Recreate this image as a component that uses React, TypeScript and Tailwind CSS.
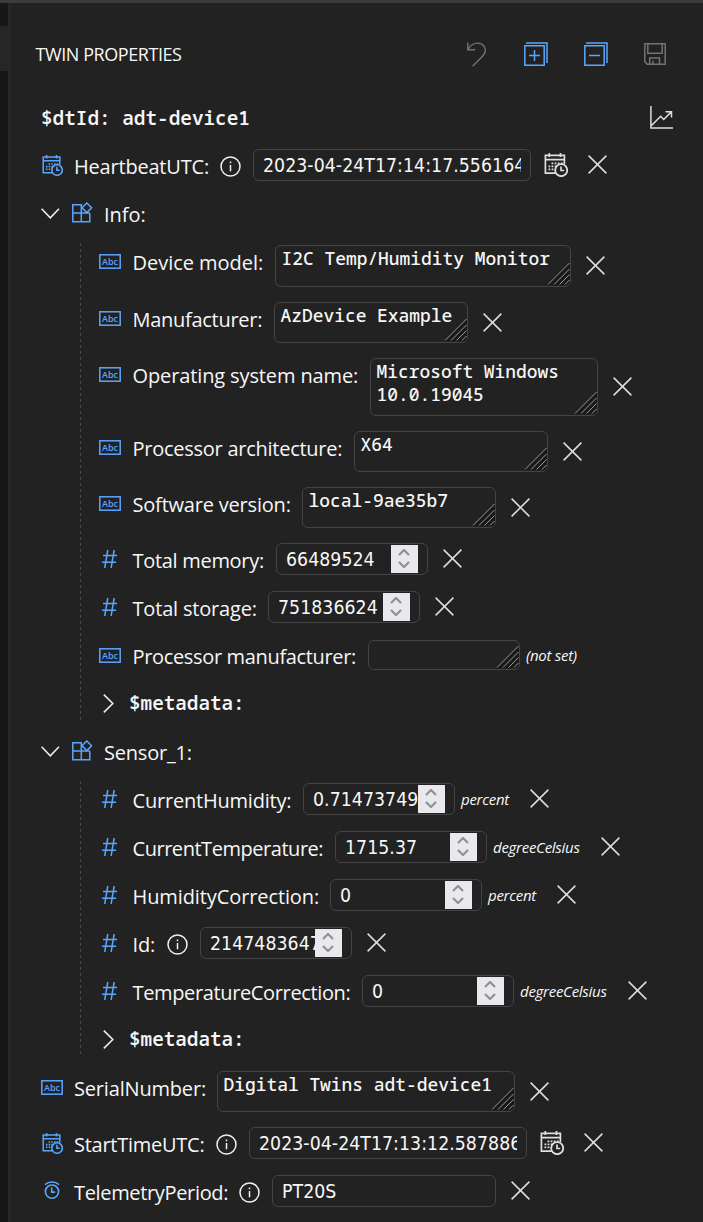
import type { ReactNode } from 'react';

const BLUE = '#5aa6ff';

function CalendarClock({ size, color }: { size: number; color: string }) {
  return (
    <svg width={size} height={size} viewBox="0 0 24 24" fill="none" stroke={color} strokeWidth="1.7" className="shrink-0">
      <path d="M12 20.2H1.4V2.4h19V11M1.4 6.7h19M5.3 0v4M16.5 0v4" />
      <path d="M7.5 10.3h11.5M4.5 13.3h8.6M4.5 16.3h7" strokeDasharray="1.8 1.3" strokeWidth="1.8" />
      <circle cx="17.2" cy="17.2" r="6" strokeWidth="1.8" />
      <path d="M17 13.4v4.1h3.2" />
    </svg>
  );
}

function AbcIcon() {
  return (
    <svg width="22" height="15" viewBox="0 0 22 15" className="shrink-0">
      <rect x="0.8" y="0.8" width="20.4" height="13.4" fill="none" stroke={BLUE} strokeWidth="1.5" />
      <text x="11" y="11" textAnchor="middle" fill={BLUE} textLength="16" className="font-['Open_Sans',sans-serif] text-[9px] font-semibold">Abc</text>
    </svg>
  );
}

function HashIcon() {
  return (
    <svg width="15" height="18" viewBox="0 0 15 18" fill="none" stroke={BLUE} strokeWidth="1.5" className="shrink-0">
      <path d="M5.8 0 2.7 18M12.2 0 9.1 18M1 5.5h14M0 12.2h14" />
    </svg>
  );
}

function ClockIcon() {
  return (
    <svg width="16" height="18" viewBox="0 0 16 18" fill="none" stroke={BLUE} strokeWidth="1.6" className="shrink-0">
      <circle cx="8" cy="10.6" r="6.6" />
      <path d="M7.7 6.5v4.6h3.4M1 3.6C5 .1 11 .1 15 3.6" />
    </svg>
  );
}

function ComponentIcon() {
  return (
    <svg width="21" height="21" viewBox="0 0 21 21" fill="none" stroke={BLUE} strokeWidth="1.5" className="shrink-0">
      <path d="M10 2.7H.8v17h17V11.2M.8 11h17M9.3 2.7v17" />
      <path d="m14.8 1 4.8 4.8-4.8 4.8L10 5.8z" />
    </svg>
  );
}

function InfoIcon() {
  return (
    <svg width="21" height="21" viewBox="0 0 21 21" fill="none" stroke="#f0f0f0" strokeWidth="1.5" className="mt-[14.5px] shrink-0">
      <circle cx="10.5" cy="10.5" r="9.5" />
      <path d="M10.5 9v6.2M10.5 5.6v1.7" />
    </svg>
  );
}

function Cross() {
  return (
    <svg width="19" height="19" viewBox="0 0 19 19" fill="none" stroke="#dedede" strokeWidth="1.5" className="-mt-px shrink-0">
      <path d="m.6.6 17.8 17.8M18.4.6.6 18.4" />
    </svg>
  );
}

function Chevron({ open }: { open?: boolean }) {
  return open ? (
    <svg width="19" height="11" viewBox="0 0 19 11" fill="none" stroke="#f2f2f2" strokeWidth="1.5" className="shrink-0">
      <path d="m.6.8 8.7 9 8.7-9" />
    </svg>
  ) : (
    <svg width="11" height="19" viewBox="0 0 11 19" fill="none" stroke="#f2f2f2" strokeWidth="1.5" className="shrink-0">
      <path d="m.8.6 9 8.9-9 8.9" />
    </svg>
  );
}

function Grip() {
  return (
    <svg width="23" height="23" viewBox="0 0 23 23" className="absolute right-0 bottom-px">
      <path d="M0 23 23 0v23z" fill="#191919" />
      <path d="M1 22.5 22.5 1M7 22.5 22.5 7M12.5 22.5l10-10M18 22.5l4.5-4.5" stroke="#9a9a9a" strokeWidth="1" />
    </svg>
  );
}

function Spinner() {
  return (
    <span className="flex h-7 w-[27px] shrink-0 items-center justify-center bg-[#e9e9ed]">
      <svg width="12" height="19" viewBox="0 0 12 19" fill="none" stroke="#8f8f9d" strokeWidth="2.2" className="-ml-px -mt-px">
        <path d="m1 6 5-5 5 5M1 13l5 5 5-5" />
      </svg>
    </span>
  );
}

type Kind = 'date' | 'area' | 'number' | 'text';

interface Prop {
  label: string;
  track?: string;
  kind: Kind;
  row: string;
  offset: string;
  box: string;
  value: string;
  info?: boolean;
  unit?: ReactNode;
  unset?: boolean;
}

const infoProps: Prop[] = [
  { label: 'Device model:', track: 'tracking-[-0.03px]', kind: 'area', row: 'h-[57px]', offset: 'w-[142px]', box: 'h-[42px] w-[296px]', value: 'I2C Temp/Humidity Monitor' },
  { label: 'Manufacturer:', track: 'tracking-[-0.28px]', kind: 'area', row: 'h-14', offset: 'w-[141px]', box: 'h-[41px] w-[194px]', value: 'AzDevice Example' },
  { label: 'Operating system name:', track: 'tracking-[-0.12px]', kind: 'area', row: 'h-[73px]', offset: 'w-[237px]', box: 'h-[58px] w-[228px]', value: 'Microsoft Windows\n10.0.19045' },
  { label: 'Processor architecture:', track: 'tracking-[-0.26px]', kind: 'area', row: 'h-14', offset: 'w-[221px]', box: 'h-[41px] w-[194px]', value: 'X64' },
  { label: 'Software version:', track: 'tracking-[-0.2px]', kind: 'area', row: 'h-14', offset: 'w-[169px]', box: 'h-[41px] w-[194px]', value: 'local-9ae35b7' },
  { label: 'Total memory:', track: 'tracking-[-0.3px]', kind: 'number', row: 'h-12', offset: 'w-[143px]', box: 'h-8 w-[152px]', value: '66489524' },
  { label: 'Total storage:', track: 'tracking-[-0.18px]', kind: 'number', row: 'h-12', offset: 'w-[135px]', box: 'h-8 w-[152px]', value: '751836624' },
  { label: 'Processor manufacturer:', track: 'tracking-[-0.34px]', kind: 'area', row: 'h-12', offset: 'w-[235px]', box: 'mt-px h-[30px] w-[152px]', value: '', unit: '(not set)', unset: true },
];

const sensorProps: Prop[] = [
  { label: 'CurrentHumidity:', track: 'tracking-[-0.2px]', kind: 'number', row: 'h-12', offset: 'w-[170px]', box: 'h-8 w-[152px]', value: '0.7147374919', unit: 'percent' },
  { label: 'CurrentTemperature:', track: 'tracking-[-0.46px]', kind: 'number', row: 'h-12', offset: 'w-[202px]', box: 'h-8 w-[152px]', value: '1715.37', unit: 'degreeCelsius' },
  { label: 'HumidityCorrection:', track: 'tracking-[-0.1px]', kind: 'number', row: 'h-12', offset: 'w-[197px]', box: 'h-8 w-[152px]', value: '0', unit: 'percent' },
  { label: 'Id:', track: 'tracking-[-0.1px]', kind: 'number', row: 'h-12', offset: 'w-[67px]', box: 'h-8 w-[152px]', value: '2147483647', info: true },
  { label: 'TemperatureCorrection:', track: 'tracking-[-0.36px]', kind: 'number', row: 'h-12', offset: 'w-[229px]', box: 'h-8 w-[152px]', value: '0', unit: 'degreeCelsius' },
];

const headProps: Prop[] = [
  { label: 'HeartbeatUTC:', track: 'tracking-[-0.2px]', kind: 'date', row: 'h-12', offset: 'w-[179px]', box: 'h-8 w-[278px]', value: '2023-04-24T17:14:17.5561641', info: true },
];

const tailProps: Prop[] = [
  { label: 'SerialNumber:', track: 'tracking-[-0.18px]', kind: 'area', row: 'h-14', offset: 'w-[143px]', box: 'h-[41px] w-[298px]', value: 'Digital Twins adt-device1' },
  { label: 'StartTimeUTC:', track: 'tracking-[-0.26px]', kind: 'date', row: 'h-12', offset: 'w-[175px]', box: 'h-8 w-[278px]', value: '2023-04-24T17:13:12.5878861', info: true },
  { label: 'TelemetryPeriod:', track: 'tracking-[-0.34px]', kind: 'text', row: 'h-12', offset: 'w-[198px]', box: 'h-8 w-[224px]', value: 'PT20S', info: true },
];

function PropIcon({ p }: { p: Prop }) {
  if (p.kind === 'area') return <div className="flex h-12 w-[22px] items-center"><AbcIcon /></div>;
  if (p.kind === 'number') return <div className="flex h-12 w-[22px] items-center justify-center pr-[2px]"><HashIcon /></div>;
  if (p.kind === 'date') return <div className="flex h-12 w-[22px] items-center pl-px"><CalendarClock size={21} color={BLUE} /></div>;
  return <div className="flex h-[46px] w-[22px] items-center justify-center"><ClockIcon /></div>;
}

function PropRow({ p, nested }: { p: Prop; nested?: boolean }) {
  return (
    <div className={`flex items-start ${p.row}`}>
      <div className={`shrink-0 ${nested ? 'w-[34px]' : 'w-[33px]'}`}><PropIcon p={p} /></div>
      <div className={`flex shrink-0 items-start justify-between pr-3 whitespace-nowrap ${p.offset}`}>
        <span className={`${nested ? '-ml-[0.5px]' : ''} pt-3 text-[20px] leading-7 ${p.track ?? ''}`}>{p.label}</span>
        {p.info && <InfoIcon />}
      </div>
      <div className="flex shrink-0 items-center pt-2">
        <div className={`relative shrink-0 overflow-hidden rounded-md border border-[#444444] ${p.box}`}>
          {p.kind === 'area' ? (
            <>
              <div className="pt-px pl-[5.5px] font-['Noto_Sans_Mono','DejaVu_Sans_Mono',monospace] text-[17.9px] leading-[23px] font-medium whitespace-pre">
                {p.value}
              </div>
              <Grip />
            </>
          ) : (
            <div className="flex h-full items-center justify-between px-[9px]">
              <span className="min-w-0 overflow-hidden pt-px font-['DejaVu_Sans_Condensed','DejaVu_Sans',sans-serif] text-[19.3px] leading-7 tracking-[0.05px] whitespace-nowrap">{p.value}</span>
              {p.kind === 'number' && <Spinner />}
            </div>
          )}
        </div>
        {p.kind === 'date' && <span className="-mt-px ml-[13px]"><CalendarClock size={24} color="#dedede" /></span>}
        {p.unit && <span className="ml-[6px] pt-px text-[15px] tracking-[-0.28px] italic">{p.unit}</span>}
        {!p.unset && <span className={p.kind === 'date' ? 'ml-5' : p.unit ? 'ml-[21px]' : 'ml-[14.5px]'}><Cross /></span>}
      </div>
    </div>
  );
}

function Group({ name, items, label }: { name: string; items: Prop[]; label: string }) {
  return (
    <section>
      <div className="flex h-12 items-start">
        <div className="flex h-12 w-[31px] items-center"><Chevron open /></div>
        <div className="flex h-[47px] w-8 items-center"><ComponentIcon /></div>
        <span className={`pt-3 text-[20px] leading-7 ${label}`}>{name}</span>
      </div>
      <div className="flex">
        <div className="mt-[6px] mr-[18px] mb-[7px] ml-[39px] w-px shrink-0 bg-[repeating-linear-gradient(to_bottom,#4a4a4a_0_3px,transparent_3px_6px)]" />
        <div>
          {items.map((p) => <PropRow key={p.label} p={p} nested />)}
          <div className="flex h-12 items-center pl-1">
            <Chevron />
            <span className="ml-[15px] pt-px font-['Noto_Sans_Mono','DejaVu_Sans_Mono',monospace] text-[19.3px] font-semibold">$metadata:</span>
          </div>
        </div>
      </div>
    </section>
  );
}

export default function App() {
  return (
    <div className="flex h-[1222px] w-[703px] flex-col overflow-hidden border-t-[3px] border-[#3b3b3b] bg-[#222222] font-['Open_Sans','Noto_Sans',sans-serif] text-[#f7f7f7]">
      <div className="flex min-h-0 flex-1">
        <div className="flex w-2 shrink-0 flex-col bg-[#171717]">
          <div className="mt-[23px] h-[45px] bg-[#262626]" />
        </div>
        <div className="w-[3px] shrink-0 bg-[#262626]" />
        <main className="w-[692px] shrink-0 pl-[30px]">
          <header className="-ml-[6px] flex h-[86px] items-center pt-[17px]">
            <h1 className="w-[431px] pl-[0.5px] text-[18px] tracking-[-0.43px]">TWIN PROPERTIES</h1>
            <svg width="20" height="25" viewBox="0 0 20 25" fill="none" stroke="#737373" strokeWidth="1.4" className="ml-px -mt-px">
              <path d="M.8.5v7.3h7.4M1 7.4C3.5 3 7 1.1 10.7 1.1c4.6 0 7.6 3.3 7.6 7.4 0 2.6-1.3 4.4-3 6.1L5.6 24.3" />
            </svg>
            <svg width="24" height="24" viewBox="0 0 24 24" fill="none" stroke={BLUE} strokeWidth="1.5" className="-mt-[2px] ml-[37px]">
              <path d="M.8 3.8h19.4v19.4H.8zM2 .9h21V21M10.5 8v11M5 13.5h11" />
            </svg>
            <svg width="24" height="24" viewBox="0 0 24 24" fill="none" stroke={BLUE} strokeWidth="1.5" className="-mt-[2px] ml-9">
              <path d="M.8 3.8h19.4v19.4H.8zM2 .9h21V21M5 13.5h11" />
            </svg>
            <svg width="22" height="22" viewBox="0 0 22 22" fill="none" stroke="#737373" strokeWidth="1.5" className="-mt-px ml-9">
              <path d="M.8.8h20.4v20.4H3.2L.8 18.8zM3.8.8v9.5h14.4V.8M5.7 21v-6h9.8v6M9 21v-3.4" />
            </svg>
          </header>
          <div className="flex h-[52px] items-center pt-[5px]">
            <span className="w-[609px] font-['Noto_Sans_Mono','DejaVu_Sans_Mono',monospace] text-[19.35px] font-semibold">$dtId: adt-device1</span>
            <svg width="23" height="23" viewBox="0 0 23 23" fill="none" stroke="#dedede" strokeWidth="1.5">
              <path d="M.9 0v22H23M1.5 19.5l9.2-9.2 3 3.2 7.6-7.6M15.5 5.8h6v5.8" />
            </svg>
          </div>
          {headProps.map((p) => <PropRow key={p.label} p={p} />)}
          <Group name="Info:" label="" items={infoProps} />
          <Group name="Sensor_1:" label="tracking-[-0.2px]" items={sensorProps} />
          {tailProps.map((p) => <PropRow key={p.label} p={p} />)}
        </main>
      </div>
    </div>
  );
}
